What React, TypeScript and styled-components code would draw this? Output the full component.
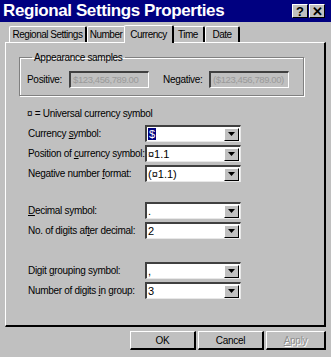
import React from "react";
import styled, { createGlobalStyle } from "styled-components";

const GlobalStyle = createGlobalStyle`
  html, body { margin: 0; padding: 0; background: #c0c0c0; }
  body {
    font-family: "Liberation Sans", Arial, sans-serif;
    font-size: 10px;
    letter-spacing: -0.3px;
    color: #000;
  }
`;

const Window = styled.div`
  width: 331px;
  height: 357px;
  box-sizing: border-box;
  background: #c0c0c0;
  display: flex;
  flex-direction: column;
`;

const TitleBar = styled.div`
  height: 22px;
  background: #000080;
  display: flex;
  align-items: center;
  padding: 0 6px 0 3px;
`;

const Title = styled.div`
  flex: 1;
  color: #fff;
  font-weight: bold;
  font-size: 17px;
  letter-spacing: -0.4px;
`;

const CaptionButton = styled.div`
  width: 16px;
  height: 14px;
  margin-left: 1px;
  box-sizing: border-box;
  background: #c0c0c0;
  border-top: 1px solid #fff;
  border-left: 1px solid #fff;
  border-right: 1px solid #000;
  border-bottom: 1px solid #000;
  display: flex;
  align-items: center;
  justify-content: center;
  font-weight: bold;
  font-size: 13px;
  letter-spacing: 0;
  line-height: 1;
`;

const Body = styled.div`
  padding: 2px 5px 0 5px;
  display: flex;
  flex-direction: column;
`;

const TabRow = styled.div`
  display: flex;
  align-items: flex-end;
  padding-left: 4px;
  height: 18px;
  position: relative;
  z-index: 1;
`;

const Tab = styled.div<{ $active?: boolean; $w: number }>`
  width: ${(p) => p.$w}px;
  height: ${(p) => (p.$active ? 18 : 16)}px;
  margin: 0 ${(p) => (p.$active ? -2 : 0)}px ${(p) => (p.$active ? -1 : 0)}px;
  background: #c0c0c0;
  box-sizing: border-box;
  border-top: 1px solid #fff;
  border-left: 1px solid #fff;
  border-right: 2px solid #000;
  border-radius: 2px 2px 0 0;
  display: flex;
  align-items: center;
  justify-content: center;
  white-space: nowrap;
  letter-spacing: -0.5px;
  position: relative;
  z-index: ${(p) => (p.$active ? 2 : 1)};
`;

const Panel = styled.div`
  height: 285px;
  box-sizing: border-box;
  border-top: 1px solid #fff;
  border-left: 1px solid #fff;
  border-right: 2px solid #000;
  border-bottom: 2px solid #000;
  padding: 9px 0 0 13px;
`;

const Group = styled.fieldset`
  width: 278px;
  height: 44px;
  box-sizing: border-box;
  margin: 0;
  padding: 0 0 0 7px;
  border: 1px solid #808080;
  box-shadow: 1px 1px 0 #fff, inset 1px 1px 0 #fff;
  display: flex;
  align-items: center;
`;

const Legend = styled.legend`
  padding: 0 2px;
  margin-left: 5px;
`;

const SampleLabel = styled.span<{ $gap: number }>`
  width: ${(p) => p.$gap}px;
`;

const SampleField = styled.div`
  width: 80px;
  height: 17px;
  box-sizing: border-box;
  border-top: 2px solid #404040;
  border-left: 2px solid #404040;
  border-right: 1px solid #fff;
  border-bottom: 1px solid #fff;
  color: #9a9a9a;
  font-size: 9.5px;
  letter-spacing: -0.4px;
  padding-left: 2px;
  display: flex;
  align-items: center;
  white-space: nowrap;
  overflow: hidden;
  margin-right: 14px;
`;

const Note = styled.div`
  margin: 12px 0 6px 8px;
`;

const Rows = styled.div<{ $top: number }>`
  margin-top: ${(p) => p.$top}px;
  display: flex;
  flex-direction: column;
  gap: 3px;
`;

const Row = styled.div`
  display: flex;
  align-items: center;
  height: 17px;
`;

const Label = styled.span`
  width: 126px;
  box-sizing: border-box;
  padding-left: 9px;
  white-space: nowrap;
`;

const Combo = styled.div`
  width: 96px;
  height: 17px;
  box-sizing: border-box;
  background: #fff;
  border-top: 2px solid #404040;
  border-left: 2px solid #404040;
  border-right: 1px solid #e8e8e8;
  border-bottom: 1px solid #e8e8e8;
  display: flex;
  align-items: center;
`;

const Value = styled.span`
  flex: 1;
  padding-left: 1px;
  font-size: 11px;
  letter-spacing: 0;
`;

const Selected = styled.span`
  background: #000080;
  color: #fff;
  padding: 0 1px;
`;

const DropButton = styled.div`
  width: 15px;
  height: 13px;
  box-sizing: border-box;
  background: #c0c0c0;
  border-top: 1px solid #fff;
  border-left: 1px solid #fff;
  border-right: 1px solid #000;
  border-bottom: 1px solid #000;
  display: flex;
  align-items: center;
  justify-content: center;
  margin-right: 1px;
`;

const Buttons = styled.div`
  display: flex;
  justify-content: flex-end;
  gap: 2px;
  margin-top: 4px;
`;

const Button = styled.div<{ $disabled?: boolean; $w: number }>`
  width: ${(p) => p.$w}px;
  height: 19px;
  box-sizing: border-box;
  border-top: 1px solid #fff;
  border-left: 1px solid #fff;
  border-right: 2px solid #000;
  border-bottom: 2px solid #000;
  display: flex;
  align-items: center;
  justify-content: center;
  color: ${(p) => (p.$disabled ? "#8f8f8f" : "#000")};
  text-shadow: ${(p) => (p.$disabled ? "1px 1px 0 #fff" : "none")};
`;

const Arrow = () => (
  <svg width="7" height="4" viewBox="0 0 7 4">
    <path d="M0 0h7L3.5 4z" fill="#000" />
  </svg>
);

type Field = { label: React.ReactNode; value: React.ReactNode };

const ComboRow = ({ label, value }: Field) => (
  <Row>
    <Label>{label}</Label>
    <Combo>
      <Value>{value}</Value>
      <DropButton>
        <Arrow />
      </DropButton>
    </Combo>
  </Row>
);

const App = () => (
  <Window>
    <GlobalStyle />
    <TitleBar>
      <Title>Regional Settings Properties</Title>
      <CaptionButton>?</CaptionButton>
      <CaptionButton>✕</CaptionButton>
    </TitleBar>
    <Body>
      <TabRow>
        <Tab $w={78}>Regional Settings</Tab>
        <Tab $w={39}>Number</Tab>
        <Tab $w={50} $active>
          Currency
        </Tab>
        <Tab $w={33}>Time</Tab>
        <Tab $w={35}>Date</Tab>
      </TabRow>
      <Panel>
        <Group>
          <Legend>Appearance samples</Legend>
          <SampleLabel $gap={42}>Positive:</SampleLabel>
          <SampleField>$123,456,789.00</SampleField>
          <SampleLabel $gap={46}>Negative:</SampleLabel>
          <SampleField>($123,456,789.00)</SampleField>
        </Group>
        <Note>¤ = Universal currency symbol</Note>
        <Rows $top={0}>
          <ComboRow
            label={<>Currency <u>s</u>ymbol:</>}
            value={<Selected>$</Selected>}
          />
          <ComboRow label={<>Position of <u>c</u>urrency symbol:</>} value="¤1.1" />
          <ComboRow label={<>Negative number <u>f</u>ormat:</>} value="(¤1.1)" />
        </Rows>
        <Rows $top={20}>
          <ComboRow label={<><u>D</u>ecimal symbol:</>} value="." />
          <ComboRow label={<>No. of digits af<u>t</u>er decimal:</>} value="2" />
        </Rows>
        <Rows $top={23}>
          <ComboRow label={<>Digit <u>g</u>rouping symbol:</>} value="," />
          <ComboRow label={<>Number of digits <u>i</u>n group:</>} value="3" />
        </Rows>
      </Panel>
      <Buttons>
        <Button $w={66}>OK</Button>
        <Button $w={66}>Cancel</Button>
        <Button $w={60} $disabled>
          <span>
            <u>A</u>pply
          </span>
        </Button>
      </Buttons>
    </Body>
  </Window>
);

export default App;
